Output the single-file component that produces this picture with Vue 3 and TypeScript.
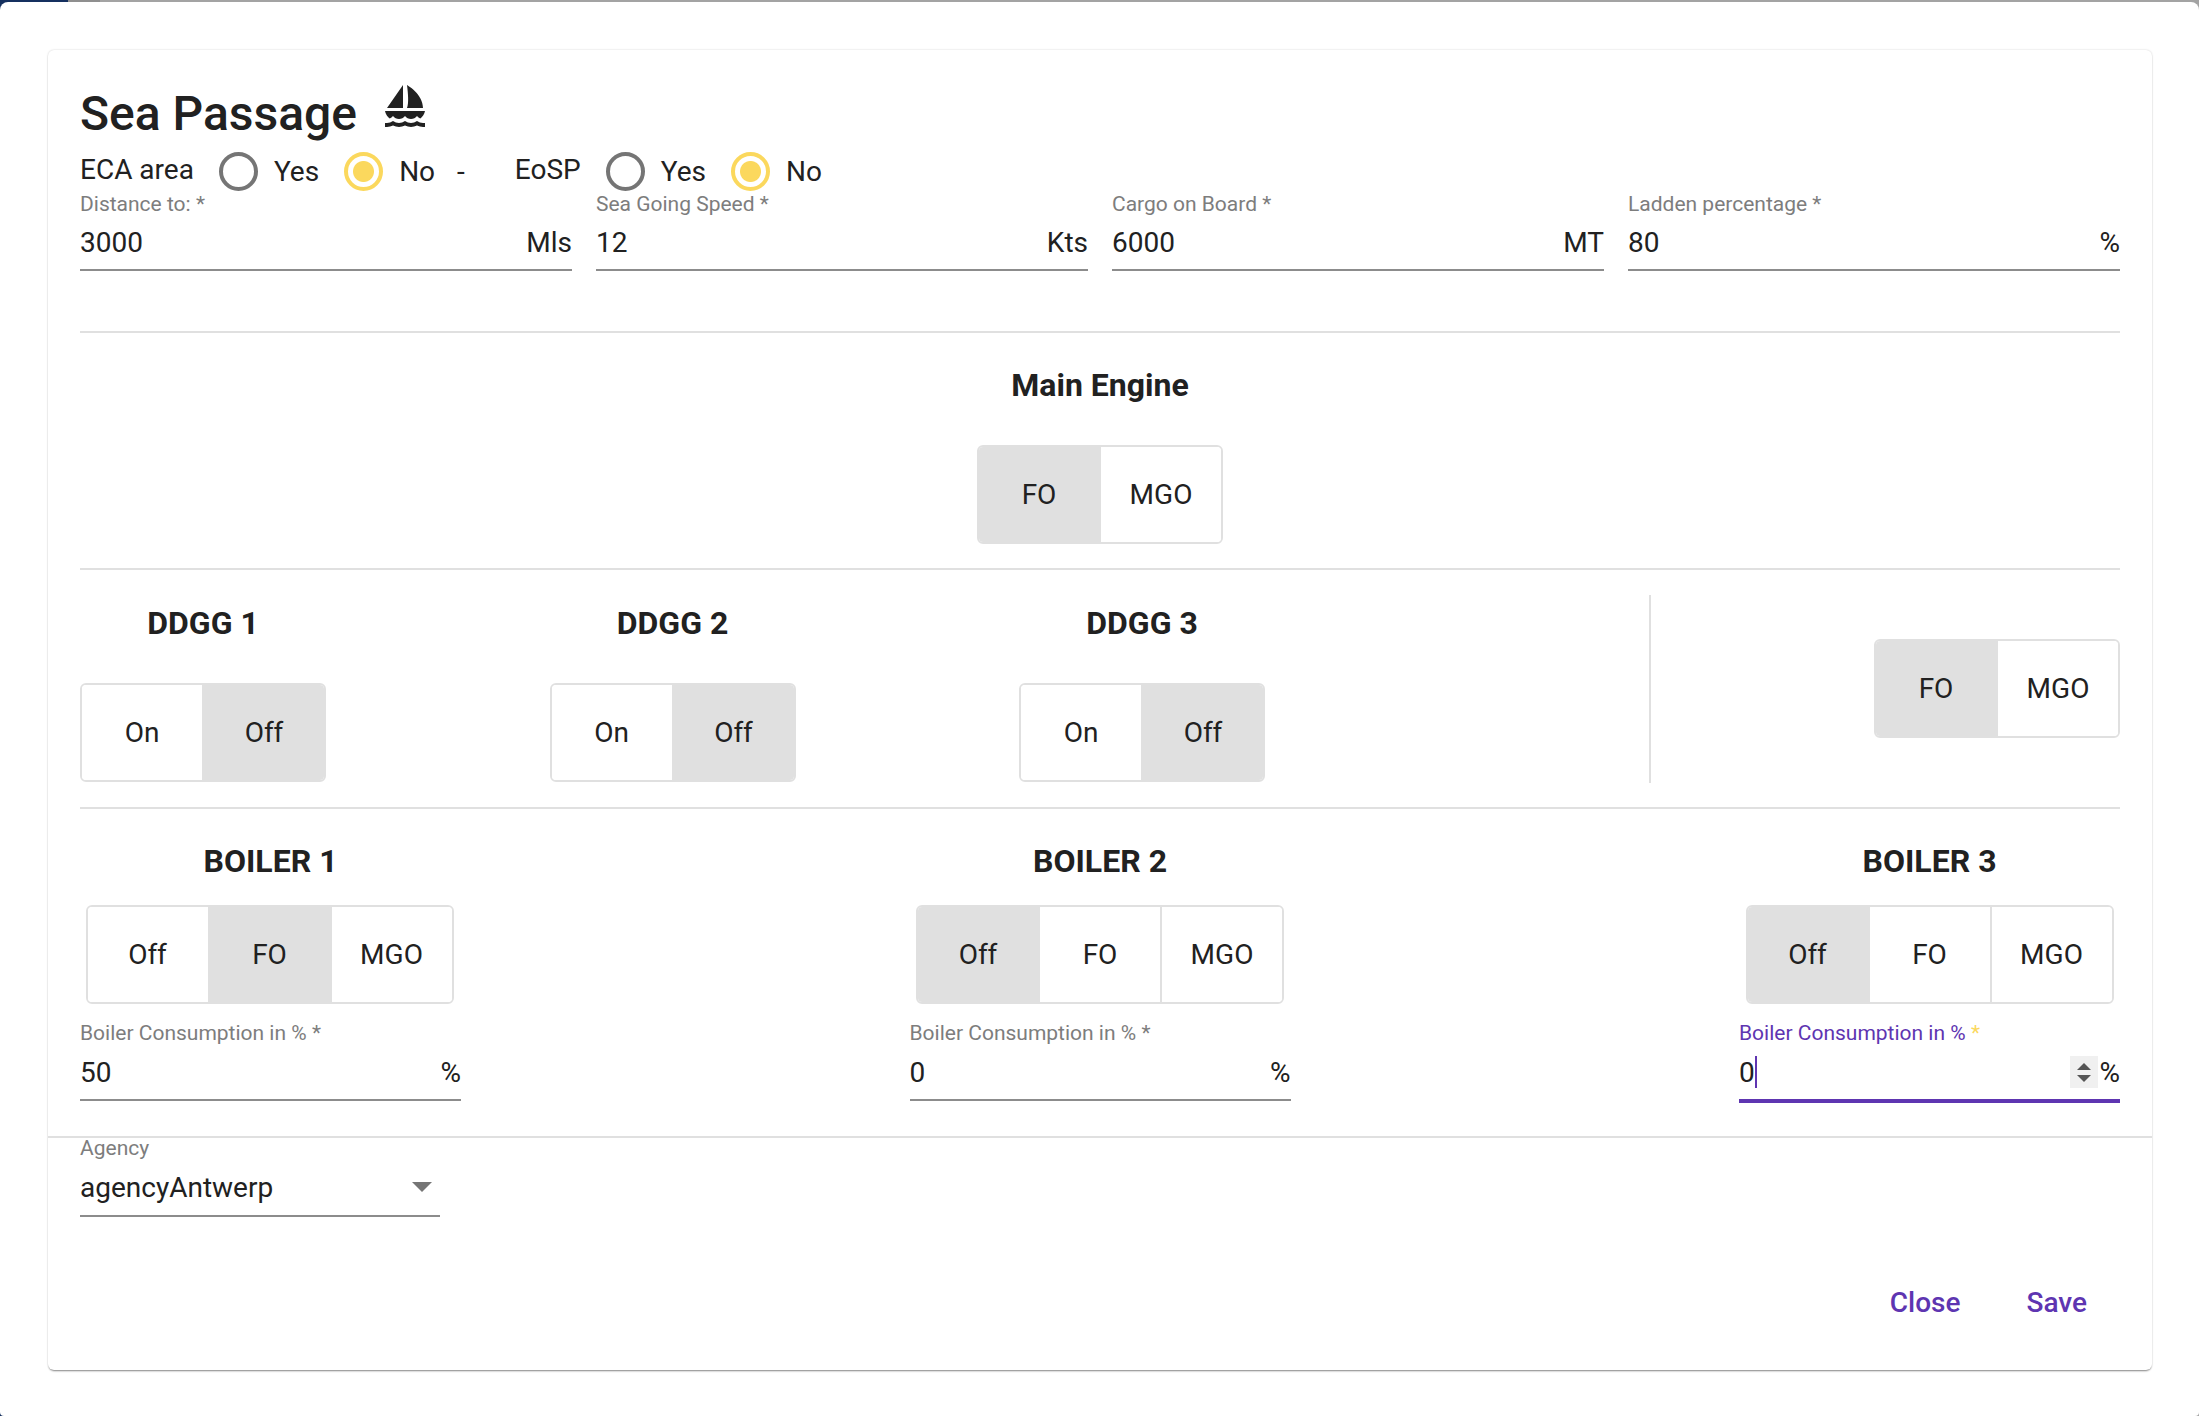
<template>
  <div class="page">
    <div class="sheet">
      <form class="card" @submit.prevent>
        <h2 class="title">
          Sea Passage
          <svg class="boat" viewBox="0 0 24 24" fill="currentColor">
            <path d="M11 13.5V2L3 13.5H11z M21 13.5C21 6.5 13 2 13 2c.5 4 1 9 0 11.5H21z M22 15H2c.31 1.53 1.16 2.84 2.33 3.73C4.98 18.46 5.55 18.01 6 17.5 6.73 18.34 7.8 19 9 19s2.27-.66 3-1.5c.73.84 1.8 1.5 3 1.5s2.27-.66 3-1.5c.45.51 1.02.96 1.67 1.23C20.84 17.84 21.69 16.53 22 15z M22 23v-2h-1c-1.04 0-2.08-.35-3-1-1.83 1.3-4.17 1.3-6 0-1.83 1.3-4.17 1.3-6 0-.91.65-1.96 1-3 1H2v2h1c1.03 0 2.05-.25 3-.72 1.89.94 4.11.94 6 0 1.89.94 4.11.94 6 0 .95.48 1.97.72 3 .72H22z" />
          </svg>
        </h2>

        <div class="radio-row">
          <span class="radio-label">ECA area</span>
          <span class="radio"></span><span class="radio-text">Yes</span>
          <span class="radio checked"></span><span class="radio-text">No</span>
          <span class="radio-sep">-</span>
          <span class="radio-label">EoSP</span>
          <span class="radio"></span><span class="radio-text">Yes</span>
          <span class="radio checked"></span><span class="radio-text">No</span>
        </div>

        <div class="fields">
          <div v-for="f in passageFields" :key="f.label" class="field">
            <label class="field-label">{{ f.label }} *</label>
            <div class="field-input">
              <span class="value">{{ f.value }}</span>
              <span class="suffix">{{ f.suffix }}</span>
            </div>
          </div>
        </div>

        <hr class="divider first" />

        <section class="engine">
          <h3 class="heading">Main Engine</h3>
          <div class="toggle">
            <button type="button" class="on">FO</button>
            <button type="button">MGO</button>
          </div>
        </section>

        <hr class="divider" />

        <section class="ddgg-row">
          <div class="ddgg-list">
            <div v-for="d in generators" :key="d" class="ddgg">
              <h3 class="heading">{{ d }}</h3>
              <div class="toggle">
                <button type="button">On</button>
                <button type="button" class="on">Off</button>
              </div>
            </div>
          </div>
          <div class="ddgg-fuel">
            <div class="toggle">
              <button type="button" class="on">FO</button>
              <button type="button">MGO</button>
            </div>
          </div>
        </section>

        <hr class="divider" />

        <section class="boilers">
          <div v-for="b in boilers" :key="b.name" class="boiler">
            <h3 class="heading">{{ b.name }}</h3>
            <div class="toggle">
              <button
                v-for="opt in boilerOptions"
                :key="opt"
                type="button"
                :class="{ on: opt === b.mode }"
              >{{ opt }}</button>
            </div>
            <div class="field" :class="{ focused: b.focused }">
              <label class="field-label">Boiler Consumption in % <em>*</em></label>
              <div class="field-input">
                <span class="value">{{ b.value }}<i v-if="b.focused" class="caret"></i></span>
                <span v-if="b.focused" class="spinner"><b class="up"></b><b class="down"></b></span>
                <span class="suffix">%</span>
              </div>
            </div>
          </div>
        </section>

        <div class="footer">
          <div class="agency">
            <label class="field-label">Agency</label>
            <div class="field-input">
              <span class="value">agencyAntwerp</span>
              <span class="select-arrow"></span>
            </div>
          </div>
          <div class="actions">
            <button type="button">Close</button>
            <button type="button">Save</button>
          </div>
        </div>
      </form>
    </div>
  </div>
</template>

<script setup lang="ts">
interface Boiler {
  name: string;
  mode: string;
  value: string;
  focused?: boolean;
}

const passageFields = [
  { label: 'Distance to:', value: '3000', suffix: 'Mls' },
  { label: 'Sea Going Speed', value: '12', suffix: 'Kts' },
  { label: 'Cargo on Board', value: '6000', suffix: 'MT' },
  { label: 'Ladden percentage', value: '80', suffix: '%' }
];

const generators = ['DDGG 1', 'DDGG 2', 'DDGG 3'];
const boilerOptions = ['Off', 'FO', 'MGO'];

const boilers: Boiler[] = [
  { name: 'BOILER 1', mode: 'FO', value: '50' },
  { name: 'BOILER 2', mode: 'Off', value: '0' },
  { name: 'BOILER 3', mode: 'Off', value: '0', focused: true }
];
</script>

<style>
html,
body {
  margin: 0;
  background: #fff;
}
</style>

<style scoped>
.page {
  width: 2199px;
  height: 1416px;
  overflow: hidden;
  /* the dimmed app bar that shows behind the dialog */
  background: linear-gradient(90deg, #15305f 0 68px, #8f8f8f 68px 100px, #a3a3a3 100px);
  font-family: Roboto, "Liberation Sans", sans-serif;
  color: #212121;
}

.sheet {
  box-sizing: border-box;
  height: 1414px;
  margin-top: 2px;
  padding: 48px 47px 0 48px;
  background: #fff;
  border-radius: 8px 8px 4px 4px;
}

.card {
  box-sizing: border-box;
  height: 1320px;
  padding: 32px 32px 0;
  background: #fff;
  border-radius: 6px;
  box-shadow: 0 2px 2px -1px rgba(0, 0, 0, 0.45), 0 0 2px rgba(0, 0, 0, 0.2);
}

.title {
  display: flex;
  align-items: center;
  height: 60px;
  margin: 2px 0 0;
  font-size: 48px;
  font-weight: 500;
  line-height: 60px;
}

.boat {
  width: 48px;
  height: 48px;
  margin: -18px 0 0 24px;
}

.radio-row {
  display: flex;
  align-items: center;
  height: 39px;
  margin-top: 8px;
  font-size: 28px;
}

.radio-label {
  margin-top: -4px;
}

.radio {
  box-sizing: border-box;
  width: 39px;
  height: 39px;
  margin-left: 25px;
  border: 4px solid #757575;
  border-radius: 50%;
}

.radio.checked {
  border-color: #fbd85d;
  background: radial-gradient(circle, #fbd85d 0 10px, transparent 11px);
}

.radio-text {
  margin-left: 16px;
}

.radio-sep {
  margin: 0 50px 0 22px;
}

.fields {
  display: grid;
  grid-template-columns: repeat(4, 1fr);
  gap: 24px;
  margin-top: 1px;
}

.fields .field-input {
  height: 55px;
}

.field-label {
  display: block;
  height: 24px;
  font-size: 21px;
  line-height: 24px;
  color: #7d7d7d;
}

.field-input {
  display: flex;
  align-items: center;
  justify-content: space-between;
  box-sizing: border-box;
  height: 56px;
  border-bottom: 2px solid #8c8c8c;
  font-size: 28px;
}

.value {
  display: flex;
  align-items: center;
}

.divider {
  height: 2px;
  margin: 0;
  border: 0;
  background: #e0e0e0;
}

.divider.first {
  margin-top: 60px;
}

.heading {
  margin: 0;
  font-size: 32px;
  font-weight: 700;
  line-height: 40px;
  text-align: center;
}

.engine {
  display: flex;
  flex-direction: column;
  align-items: center;
  height: 235px;
  padding-top: 32px;
  box-sizing: border-box;
}

.toggle {
  display: inline-flex;
  box-sizing: border-box;
  height: 99px;
  overflow: hidden;
  border: 2px solid #e0e0e0;
  border-radius: 6px;
  background: #fff;
}

.engine .toggle {
  margin-top: 40px;
}

.toggle button {
  width: 122px;
  padding: 0;
  border: 0;
  border-left: 2px solid #e0e0e0;
  background: #fff;
  font: inherit;
  font-size: 28px;
  color: #212121;
}

.toggle button:first-child {
  width: 120px;
  border-left: 0;
}

.toggle button.on {
  background: #e0e0e0;
}

.ddgg-row {
  display: flex;
  height: 237px;
  box-sizing: border-box;
  padding-top: 25px;
}

.ddgg-list {
  display: flex;
  flex: none;
  gap: 223.5px;
  width: 1571px;
  height: 188px;
  border-right: 2px solid #e0e0e0;
  box-sizing: border-box;
}

.ddgg {
  width: 246px;
}

.ddgg .heading {
  height: 88px;
  line-height: 56px;
}

.ddgg-fuel {
  display: flex;
  flex: 1;
  align-items: flex-start;
  justify-content: flex-end;
  padding-top: 44px;
}

.boilers {
  display: flex;
  justify-content: space-between;
  height: 327px;
  box-sizing: border-box;
  padding-top: 32px;
}

.boiler {
  display: flex;
  flex-direction: column;
  align-items: center;
  width: 381px;
}

.boiler .toggle {
  margin-top: 24px;
}

.boiler:first-child .toggle {
  margin-right: 2px;
}

.boiler .field {
  align-self: stretch;
  margin-top: 17px;
}

.field.focused .field-label {
  color: #5e35b1;
}

.field-label em {
  font-style: normal;
}

.field.focused .field-label em {
  color: #fbd85d;
}

.field.focused .field-input {
  height: 58px;
  border-bottom: 4px solid #5e35b1;
}

.caret {
  display: inline-block;
  width: 2px;
  height: 32px;
  background: #5e35b1;
}

.spinner {
  display: flex;
  flex-direction: column;
  align-items: center;
  justify-content: center;
  gap: 5px;
  width: 28px;
  height: 32px;
  margin: 0 1px 0 auto;
  background: #f0f0f0;
}

.spinner b {
  width: 0;
  height: 0;
  border-left: 7px solid transparent;
  border-right: 7px solid transparent;
}

.spinner .up {
  border-bottom: 7px solid #555;
}

.spinner .down {
  border-top: 7px solid #555;
}

.footer {
  position: relative;
  height: 234px;
  margin: 0 -32px;
  padding: 0 32px;
  border-top: 2px solid #e0e0e0;
}

.agency {
  width: 360px;
}

.agency .field-label {
  margin-top: -2px;
}

.agency .field-input {
  height: 57px;
  padding: 0 8px 1px 0;
}

.select-arrow {
  width: 0;
  height: 0;
  border-left: 10px solid transparent;
  border-right: 10px solid transparent;
  border-top: 10px solid #757575;
}

.actions {
  position: absolute;
  right: 65px;
  bottom: 53px;
  display: flex;
  gap: 66px;
}

.actions button {
  padding: 0;
  border: 0;
  background: none;
  font: inherit;
  font-size: 28px;
  font-weight: 500;
  color: #5e35b1;
}
</style>
